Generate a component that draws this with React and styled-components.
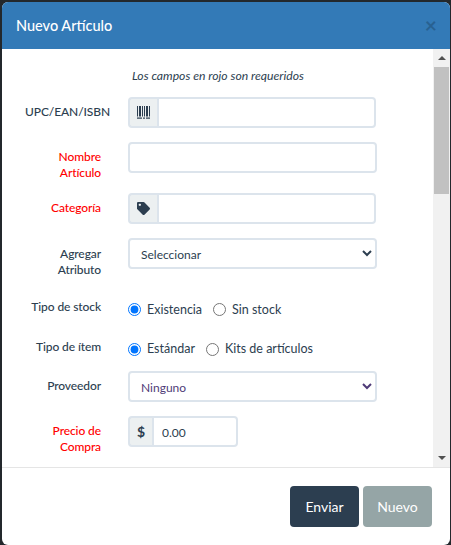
import React from 'react';
import styled, { createGlobalStyle } from 'styled-components';
import { FaTag } from 'react-icons/fa';

const GlobalStyle = createGlobalStyle`
  html, body {
    margin: 0;
    height: 100%;
    overflow: hidden;
    background: #23282c;
  }
  * {
    box-sizing: border-box;
  }
`;

const Page = styled.div`
  height: 545px;
  padding: 2px 1px 0 2px;
  font-family: Lato, "Liberation Sans", sans-serif;
  color: #2c3e50;
`;

const Modal = styled.div`
  height: 100%;
  display: flex;
  flex-direction: column;
  background: #fff;
  border-radius: 6px;
  overflow: hidden;
`;

const Header = styled.div`
  height: 47px;
  flex: none;
  display: flex;
  align-items: center;
  justify-content: space-between;
  padding: 0 13px 0 14px;
  background: #337ab7;
`;

const Title = styled.h4`
  margin: 1px 0 0;
  font-size: 14.5px;
  font-weight: 500;
  line-height: 1;
  color: #fff;
`;

const Close = styled.span`
  margin-top: -3px;
  font-size: 21px;
  font-weight: 700;
  line-height: 1;
  color: #000;
  opacity: 0.2;
`;

const Body = styled.div`
  flex: 1;
  min-height: 0;
  display: flex;
  border-bottom: 1px solid #e5e5e5;
`;

const Content = styled.div`
  flex: 1;
  min-width: 0;
  overflow: hidden;
  padding: 19px 0 0 23px;
`;

const Note = styled.p`
  margin: 0 0 13px 107px;
  font-size: 12.2px;
  line-height: 16px;
  font-style: italic;
`;

const Row = styled.div`
  display: flex;
  align-items: flex-start;
  gap: 27px;
  margin-bottom: 12px;
`;

const Label = styled.label`
  flex: none;
  width: 76px;
  padding-top: ${(p) => p.$pad || 7}px;
  font-size: 12px;
  letter-spacing: -0.1px;
  line-height: 16px;
  font-weight: 500;
  text-align: right;
  color: ${(p) => (p.$required ? '#f00' : '#2c3e50')};
`;

const Group = styled.div`
  display: flex;
  width: ${(p) => p.$width || 248}px;
  height: 31px;
  margin-bottom: 2px;
`;

const Addon = styled.span`
  flex: none;
  width: ${(p) => p.$width || 29}px;
  display: flex;
  align-items: center;
  justify-content: center;
  background: #ecf0f1;
  border: 2px solid #dce4ec;
  border-right: 0;
  border-radius: 4px 0 0 4px;
  font-size: 14px;
  font-weight: 700;
  color: #2c3e50;
`;

const Input = styled.input`
  flex: 1;
  min-width: 0;
  height: 100%;
  padding: 2px 8px 0;
  background: #fff;
  border: 2px solid #dce4ec;
  border-radius: ${(p) => (p.$joined ? '0 4px 4px 0' : '4px')};
  font: 12px Lato, "Liberation Sans", sans-serif;
  color: #2c3e50;
  outline: none;
`;

const Select = styled.select`
  width: 249px;
  height: 31px;
  margin-bottom: 2px;
  padding: 2px 7px 0;
  background: #fff;
  border: 2px solid #dce4ec;
  border-radius: 4px;
  font: 12px Lato, "Liberation Sans", sans-serif;
  color: ${(p) => p.$color || '#2c3e50'};
  outline: none;
`;

const Radios = styled.div`
  height: ${(p) => p.$height || 28}px;
  padding-top: 11px;
  display: flex;
  align-items: ${(p) => (p.$height ? 'flex-start' : 'center')};
  gap: 11px;
`;

const RadioLabel = styled.label`
  display: flex;
  align-items: center;
  gap: 6px;
  font-size: 12.5px;
  line-height: 16px;
`;

const Radio = styled.input`
  width: 13px;
  height: 13px;
  margin: 0;
`;

const ScrollTrack = styled.div`
  flex: none;
  width: 17px;
  display: flex;
  flex-direction: column;
  align-items: center;
  background: #f1f1f1;
`;

const ScrollButton = styled.div`
  flex: none;
  width: 100%;
  height: 18px;
  display: flex;
  align-items: center;
  justify-content: center;
`;

const Arrow = styled.span`
  width: 0;
  height: 0;
  border-left: 4px solid transparent;
  border-right: 4px solid transparent;
  border-bottom: ${(p) => (p.$down ? '0' : '4px solid #505050')};
  border-top: ${(p) => (p.$down ? '4px solid #505050' : '0')};
`;

const ScrollThumb = styled.div`
  flex: none;
  width: 15px;
  height: 127px;
  background: #c1c1c1;
`;

const ScrollSpace = styled.div`
  flex: 1;
`;

const Footer = styled.div`
  flex: none;
  display: flex;
  justify-content: flex-end;
  gap: 4px;
  padding: 18px 18px 18px 0;
`;

const Button = styled.button`
  width: 69px;
  height: 41px;
  padding: 0;
  border: 0;
  border-radius: 4px;
  background: ${(p) => (p.$muted ? '#95a5a6' : '#2c3e50')};
  font: 14px Lato, "Liberation Sans", sans-serif;
  color: #fff;
`;

// bars of the barcode glyph: [x, width]
const BARS = [[0, 1], [2, 2], [5, 1], [7, 1], [9, 2], [12, 1]];

const BarcodeIcon = () => (
  <svg width="13" height="13" viewBox="0 0 13 13" fill="#2c3e50">
    {BARS.map(([x, w]) => <rect key={x} x={x} y="0" width={w} height="10.5" />)}
    <rect x="0" y="11.5" width="5" height="1.2" />
    <rect x="6" y="11.5" width="2" height="1.2" />
    <rect x="9" y="11.5" width="4" height="1.2" />
  </svg>
);

const App = () => {
  return (
    <Page>
      <GlobalStyle />
      <Modal>
        <Header>
          <Title>Nuevo Artículo</Title>
          <Close>×</Close>
        </Header>
        <Body>
          <Content>
            <Note>Los campos en rojo son requeridos</Note>
            <Row>
              <Label>UPC/EAN/ISBN</Label>
              <Group>
                <Addon><BarcodeIcon /></Addon>
                <Input $joined />
              </Group>
            </Row>
            <Row>
              <Label $required>Nombre Artículo</Label>
              <Group $width={249}><Input /></Group>
            </Row>
            <Row>
              <Label $required>Categoría</Label>
              <Group>
                <Addon><FaTag size={13} /></Addon>
                <Input $joined />
              </Group>
            </Row>
            <Row>
              <Label $pad={8}>Agregar Atributo</Label>
              <Select defaultValue="s">
                <option value="s">Seleccionar</option>
              </Select>
            </Row>
            <Row>
              <Label $pad={9}>Tipo de stock</Label>
              <Radios>
                <RadioLabel><Radio type="radio" name="stock" defaultChecked />Existencia</RadioLabel>
                <RadioLabel><Radio type="radio" name="stock" />Sin stock</RadioLabel>
              </Radios>
            </Row>
            <Row>
              <Label $pad={9}>Tipo de ítem</Label>
              <Radios $height={29}>
                <RadioLabel><Radio type="radio" name="item" defaultChecked />Estándar</RadioLabel>
                <RadioLabel><Radio type="radio" name="item" />Kits de artículos</RadioLabel>
              </Radios>
            </Row>
            <Row>
              <Label>Proveedor</Label>
              <Select $color="#4f3b78" defaultValue="n">
                <option value="n">Ninguno</option>
              </Select>
            </Row>
            <Row>
              <Label $required>Precio de Compra</Label>
              <Group $width={110}>
                <Addon $width={24}>$</Addon>
                <Input $joined defaultValue="0.00" />
              </Group>
            </Row>
          </Content>
          <ScrollTrack>
            <ScrollButton><Arrow /></ScrollButton>
            <ScrollThumb />
            <ScrollSpace />
            <ScrollButton><Arrow $down /></ScrollButton>
          </ScrollTrack>
        </Body>
        <Footer>
          <Button>Enviar</Button>
          <Button $muted>Nuevo</Button>
        </Footer>
      </Modal>
    </Page>
  );
};

export default App;
